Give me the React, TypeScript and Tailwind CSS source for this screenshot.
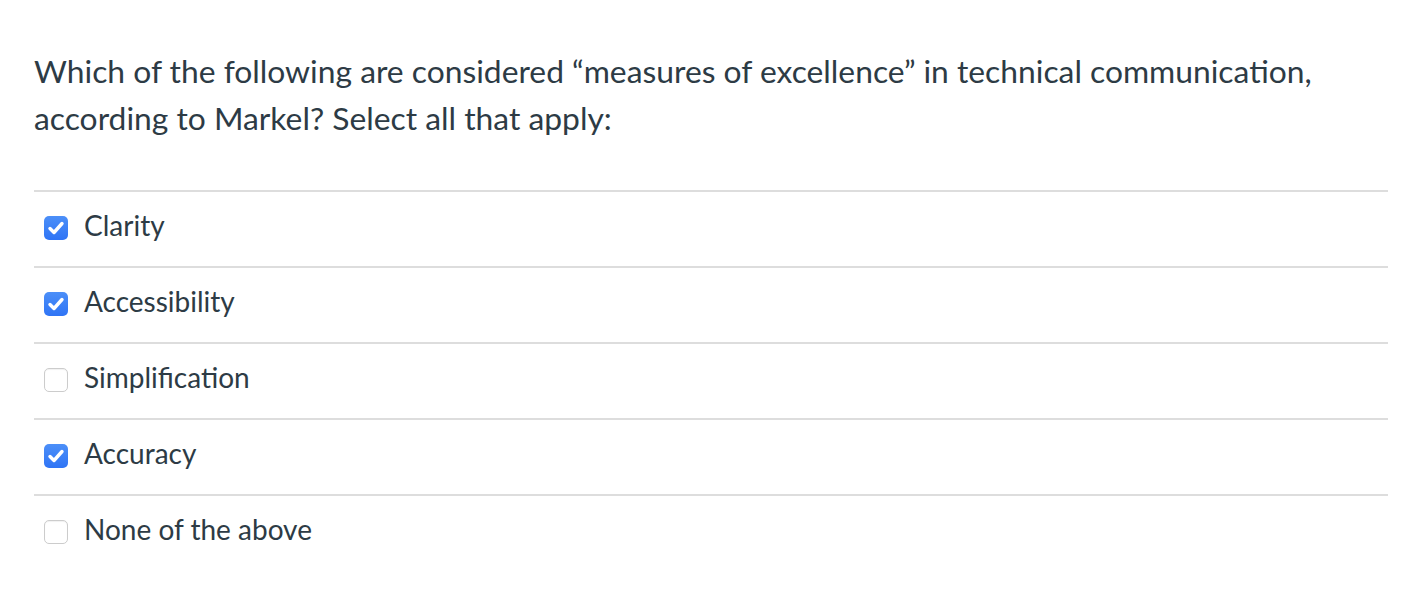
import React from "react";

const options: { label: string; checked: boolean }[] = [
  { label: "Clarity", checked: true },
  { label: "Accessibility", checked: true },
  { label: "Simplification", checked: false },
  { label: "Accuracy", checked: true },
  { label: "None of the above", checked: false },
];

function Box({ checked }: { checked: boolean }) {
  if (checked) {
    return (
      <div className="w-[24px] h-[24px] mb-[2px] rounded-[5px] bg-gradient-to-b from-[#4c8ff8] to-[#2f74f5] flex items-center justify-center shrink-0">
        <svg width="24" height="24" viewBox="0 0 24 24" fill="none">
          <path d="M6 12.5 L10 16.5 L18 7.5" stroke="white" strokeWidth="3.4" strokeLinecap="round" strokeLinejoin="round" />
        </svg>
      </div>
    );
  }
  return (
    <div className="w-[24px] h-[24px] mb-[2px] rounded-[5px] bg-white border border-[#cccccc] shadow-[inset_0_1px_1px_rgba(0,0,0,0.06)] shrink-0" />
  );
}

export default function App() {
  return (
    <div className="w-[1418px] h-[594px] bg-white text-[#2d3b45] font-['Lato',_'Noto_Sans',_sans-serif] overflow-hidden">
      <div className="pl-[34px] pr-[30px] pt-[48px]">
        <p className="text-[31.8px] leading-[47px]">
          Which of the following are considered “measures of excellence” in technical communication, according to Markel? Select all that apply:
        </p>
        <div className="mt-[48px]">
          {options.map((o) => (
            <div key={o.label} className="border-t-2 border-[#dddddd] h-[76px] flex items-center pl-[10px] gap-[16px]">
              <Box checked={o.checked} />
              <span className="text-[28px] leading-[40px] mb-[8px]">{o.label}</span>
            </div>
          ))}
        </div>
      </div>
    </div>
  );
}
